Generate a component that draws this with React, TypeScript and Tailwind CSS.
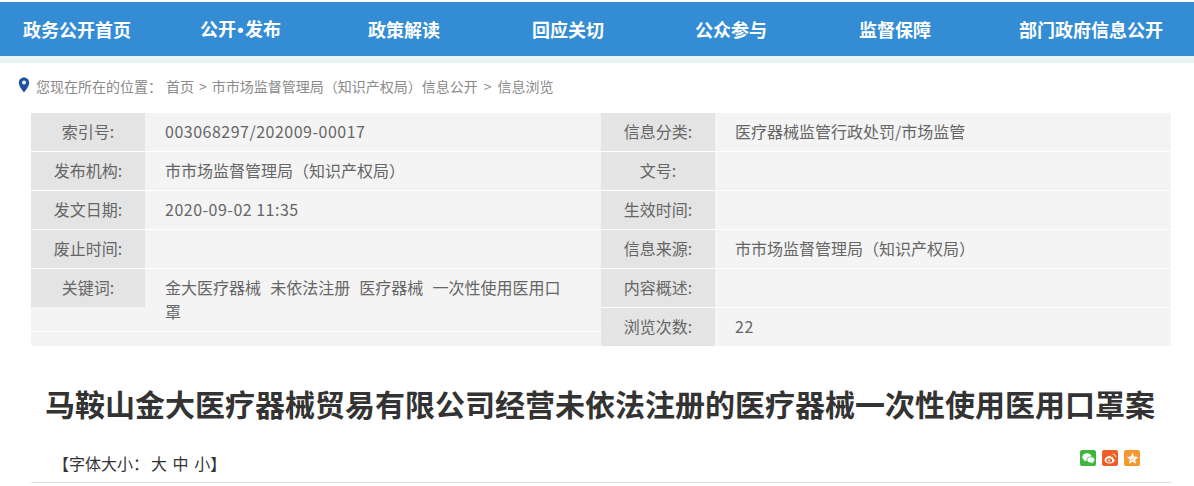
import React from "react";

const font = { fontFamily: '"Microsoft YaHei","Noto Sans CJK SC",sans-serif' };

const nav = [
  { t: "政务公开首页", c: "w-[108px]" },
  { t: "公开•发布", c: "ml-[69px] w-[81px]" },
  { t: "政策解读", c: "ml-[87px] w-[72px]" },
  { t: "回应关切", c: "ml-[92px] w-[72px]" },
  { t: "公众参与", c: "ml-[91px] w-[72px]" },
  { t: "监督保障", c: "ml-[92px] w-[72px]" },
  { t: "部门政府信息公开", c: "ml-[88px] w-[144px]" },
];

function Row({ label, value, tall, last, digits }: { label: string; value?: string; tall?: boolean; last?: boolean; digits?: boolean }) {
  return (
    <div className={`flex items-start bg-[#f4f4f4] ${tall ? "h-[62px] mb-px" : last ? "h-[38px]" : "h-[38px] mb-px"}`}>
      <div className="h-[38px] w-[114px] shrink-0 bg-[#e4e4e4] text-center leading-[36px] text-[#666]">{label}</div>
      <div className={`flex-1 whitespace-pre-wrap pl-[20px] text-[#666] ${digits ? "tracking-[0.5px]" : ""} ${tall ? "pr-[30px] pt-[6px] leading-[24px] [word-spacing:1px]" : "pr-[30px] leading-[36px]"}`}>{value}</div>
    </div>
  );
}

export default function App() {
  return (
    <div className="h-[486px] w-[1194px] overflow-hidden bg-white text-[16px]" style={font}>
      <div className="bg-white pt-[2px]">
        <div className="flex h-[54px] items-center bg-[#348dd4] pl-[23px]">
          {nav.map((n) => (
            <div key={n.t} className={`${n.c} shrink-0 whitespace-nowrap text-[18px] font-bold text-white`}>
              {n.t.includes("•") ? (
                <>
                  公开<span className="inline-block w-[9px] text-center font-['Liberation_Sans']">•</span>发布
                </>
              ) : (
                n.t
              )}
            </div>
          ))}
        </div>
        <div className="h-[7px] bg-[#eaf3f3]" />
      </div>

      <div className="flex h-[50px] items-center pb-[4px] pl-[18px] text-[14px] text-[#8a8a8a]">
        <svg width="12" height="16" viewBox="0 0 12 17" className="mr-[6px] -mt-[2px]">
          <path d="M6 .5C2.800.5.500 3 .500 6c0 3.600 3.600 7.600 5.500 10.500C7.900 13.600 11.500 9.600 11.500 6 11.500 3 9.200.5 6 .5z" fill="#1f4f9f" />
          <circle cx="6" cy="5.800" r="2.100" fill="#fff" />
        </svg>
        <span>您现在所在的位置：</span>
        <span className="ml-[4px]">首页</span>
        <span className="ml-[5px]">&gt;</span>
        <span className="ml-[5px]">市市场监督管理局（知识产权局）信息公开</span>
        <span className="ml-[6px]">&gt;</span>
        <span className="ml-[6px]">信息浏览</span>
      </div>

      <div className="mx-[31px] w-[1140px]">
        <div className="grid grid-cols-2">
          <div className="flex flex-col">
            <Row label="索引号:" value="003068297/202009-00017" digits />
            <Row label="发布机构:" value="市市场监督管理局（知识产权局）" />
            <Row label="发文日期:" value="2020-09-02 11:35" digits />
            <Row label="废止时间:" />
            <Row label="关键词:" tall value="金大医疗器械  未依法注册  医疗器械  一次性使用医用口罩" />
            <div className="flex-1 bg-[#f4f4f4]" />
          </div>
          <div>
            <Row label="信息分类:" value="医疗器械监管行政处罚/市场监管" />
            <Row label="文号:" />
            <Row label="生效时间:" />
            <Row label="信息来源:" value="市市场监督管理局（知识产权局）" />
            <Row label="内容概述:" />
            <Row label="浏览次数:" value="22" digits last />
          </div>
        </div>

        <h1 className="mt-[35px] whitespace-nowrap pr-[2px] text-center text-[30px] font-bold leading-[44px] text-[#333]">
          马鞍山金大医疗器械贸易有限公司经营未依法注册的医疗器械一次性使用医用口罩案
        </h1>

        <div className="mt-[19px] flex h-[39px] items-start justify-between border-b border-[#dcdcdc]">
          <div className="whitespace-pre pl-[22px] pt-[7px] leading-[24px] text-[#333] [word-spacing:2px]">
            【字体大小：<span className="ml-[2px]">大 中 小</span>】
          </div>
          <div className="mr-[31px] mt-[6px] flex gap-[6px]">
            <div className="flex h-[16px] w-[16px] items-center justify-center rounded-[2px] bg-[#3fb73f]">
              <svg width="13" height="11" viewBox="0 0 13 11">
                <ellipse cx="5" cy="4" rx="4.700" ry="3.700" fill="#fff" />
                <path d="M2.200 6.500 1.800 8.500 4 7.200z" fill="#fff" />
                <ellipse cx="8.800" cy="6.800" rx="3.900" ry="3.100" fill="#fff" stroke="#3fb73f" strokeWidth=".7" />
                <path d="M10.500 9 11.300 10.600 9.200 9.600z" fill="#fff" />
              </svg>
            </div>
            <div className="flex h-[16px] w-[16px] items-center justify-center rounded-[2px] bg-[#ee5f28]">
              <svg width="13" height="11" viewBox="0 0 13 11">
                <path d="M5.500 2.800C2.900 3.300.6 5.400.6 7.300c0 1.900 2.300 3.200 4.900 3.200 2.800 0 5.100-1.400 5.100-3 0-1.200-1.200-1.500-1.500-1.700.4-1 .2-1.800-1-1.900-.7 0-1.300.3-1.500.3.300-1.100 0-1.900-1.100-1.400z" fill="#fff" />
                <ellipse cx="5.300" cy="7.400" rx="2.800" ry="2.100" fill="#ee5f28" />
                <circle cx="5.100" cy="7.500" r="1" fill="#fff" />
                <path d="M8.800 1.200c1.600 0 3 1.300 3 3" fill="none" stroke="#fff" strokeWidth=".9" />
              </svg>
            </div>
            <div className="flex h-[16px] w-[16px] items-center justify-center rounded-[2px] bg-[#f6982f]">
              <svg width="13" height="13" viewBox="0 0 13 13">
                <path d="M6.500.8 8.200 4.500l4 .5-3 2.700.8 4-3.500-2-3.500 2 .8-4-3-2.700 4-.5z" fill="#fff" />
                <path d="M4.800 8.200C6.500 7.700 7.500 6.800 8.300 5.600" fill="none" stroke="#f6982f" strokeWidth=".8" />
              </svg>
            </div>
          </div>
        </div>
      </div>
    </div>
  );
}
